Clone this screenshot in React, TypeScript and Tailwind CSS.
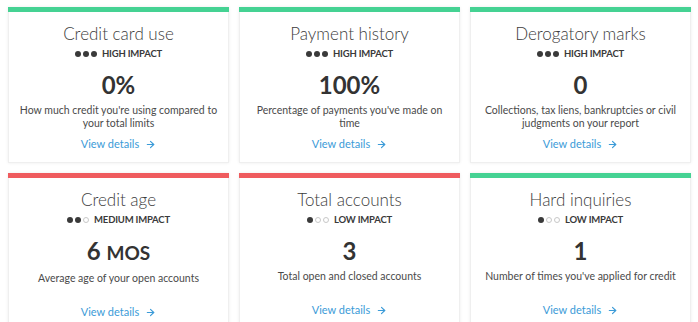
import { ArrowRight } from "lucide-react";

type Factor = {
  title: string;
  impact: number;
  impactLabel: string;
  value: React.ReactNode;
  description: string;
  good: boolean;
};

const factors: Factor[] = [
  {
    title: "Credit card use",
    impact: 3,
    impactLabel: "HIGH IMPACT",
    value: "0%",
    description: "How much credit you're using compared to your total limits",
    good: true,
  },
  {
    title: "Payment history",
    impact: 3,
    impactLabel: "HIGH IMPACT",
    value: "100%",
    description: "Percentage of payments you've made on time",
    good: true,
  },
  {
    title: "Derogatory marks",
    impact: 3,
    impactLabel: "HIGH IMPACT",
    value: "0",
    description: "Collections, tax liens, bankruptcies or civil judgments on your report",
    good: true,
  },
  {
    title: "Credit age",
    impact: 2,
    impactLabel: "MEDIUM IMPACT",
    value: (
      <>
        6 <span className="text-[19px]">MOS</span>
      </>
    ),
    description: "Average age of your open accounts",
    good: false,
  },
  {
    title: "Total accounts",
    impact: 1,
    impactLabel: "LOW IMPACT",
    value: "3",
    description: "Total open and closed accounts",
    good: false,
  },
  {
    title: "Hard inquiries",
    impact: 1,
    impactLabel: "LOW IMPACT",
    value: "1",
    description: "Number of times you've applied for credit",
    good: true,
  },
];

const Dots = ({ filled }: { filled: number }) => (
  <span className="flex items-center gap-[2px]">
    {[0, 1, 2].map((i) =>
      i < filled ? (
        <span key={i} className="w-[6px] h-[6px] rounded-full bg-[#3a3a3a]" />
      ) : (
        <span key={i} className="w-[6px] h-[6px] rounded-full border border-[#c8c8c8]" />
      )
    )}
  </span>
);

const FactorCard = ({ f }: { f: Factor }) => (
  <div className="flex flex-col h-[156px] bg-white shadow-[0_0_3px_rgba(0,0,0,0.08)]">
    <div className={f.good ? "h-[5px] bg-[#45d293]" : "h-[5px] bg-[#ef5b5e]"} />
    <div className="flex flex-col items-center border-x border-b border-[#efefef] flex-1 px-[8px] text-center">
      <h2 className="mt-[11px] text-[17px] leading-[22px] font-light text-[#3c3c3c]">{f.title}</h2>
      <div className="mt-[2px] flex items-center gap-[5px] h-[14px]">
        <Dots filled={f.impact} />
        <span className="text-[9.5px] font-bold tracking-[-0.2px] text-[#3a3a3a]">{f.impactLabel}</span>
      </div>
      <p className="mt-[11px] text-[24px] leading-[26px] font-bold text-[#333]">{f.value}</p>
      <p className="mt-[6px] text-[10.5px] leading-[13px] text-[#4a4a4a] h-[26px]">{f.description}</p>
      <a className="mt-[6px] flex items-center gap-[6px] text-[11px] text-[#3b9bd8]">
        View details
        <ArrowRight size={11} strokeWidth={2.5} />
      </a>
    </div>
  </div>
);

export default function App() {
  return (
    <div
      className="w-[698px] h-[322px] overflow-hidden bg-white pt-[7px] pl-[8px] pr-[7px]"
      style={{ fontFamily: "Lato, 'Open Sans', sans-serif" }}
    >
      <div className="grid grid-cols-3 gap-x-[10px] gap-y-[10px]">
        {factors.map((f) => (
          <FactorCard key={f.title} f={f} />
        ))}
      </div>
    </div>
  );
}
